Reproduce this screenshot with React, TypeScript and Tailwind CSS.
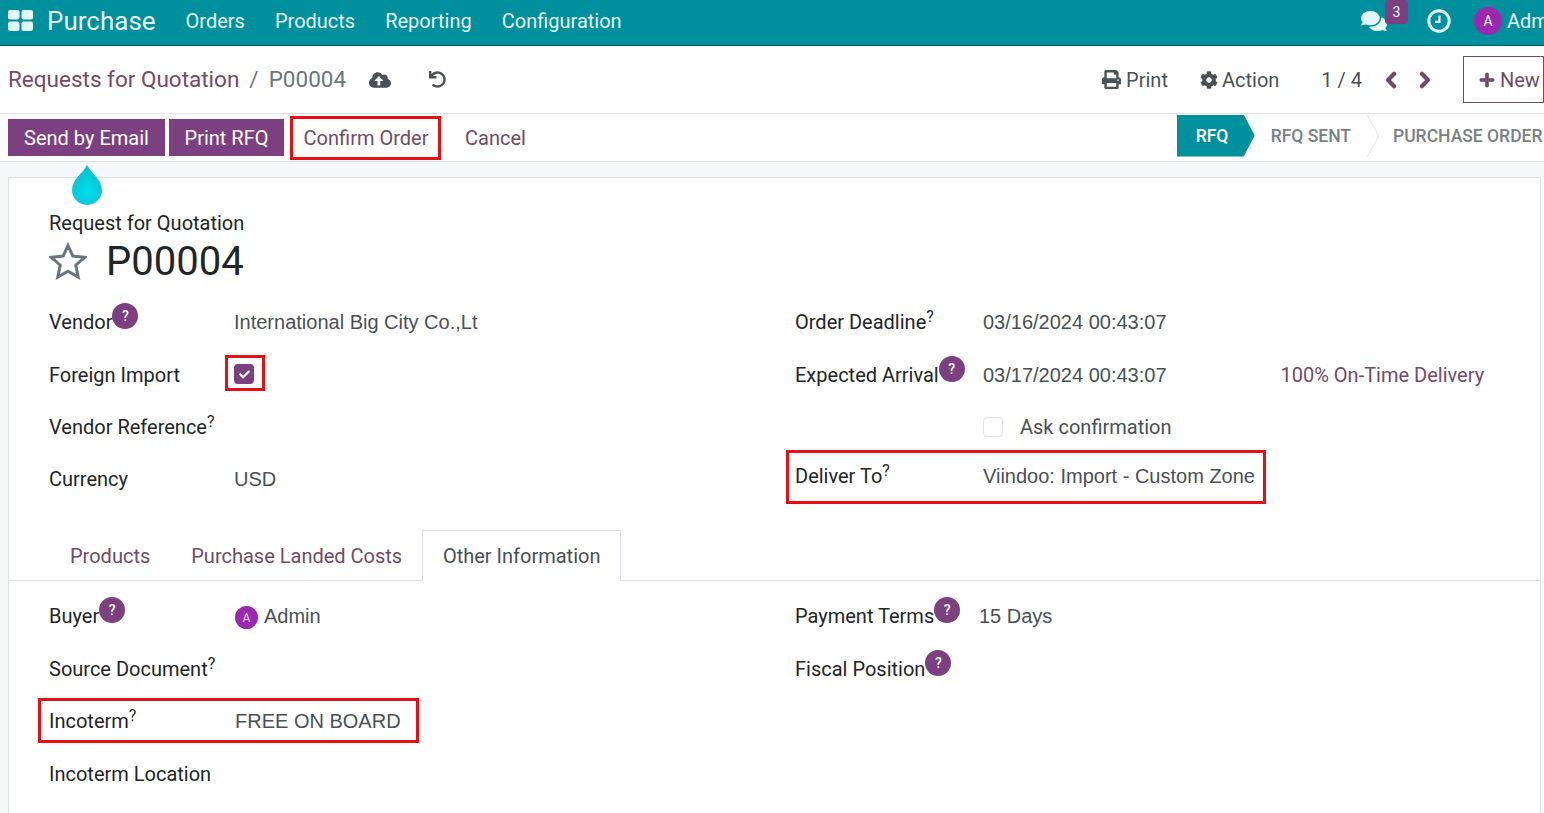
import { FaCloudUploadAlt, FaUndo, FaPrint, FaCog, FaChevronLeft, FaChevronRight, FaPlus, FaComments, FaCheck } from 'react-icons/fa';
import type { ReactNode } from 'react';

const PLUM = 'text-[#714b67]';
const INPUT = "font-['Liberation_Sans',sans-serif]";

function Help() {
  return (
    <span className="absolute left-full bottom-[5px] flex h-[26px] w-[26px] items-center justify-center rounded-full bg-[#7c3f80] text-[14px] font-medium text-white">
      ?
    </span>
  );
}

function Label({ text, help }: { text: string; help?: 'circle' | 'sup' }) {
  return (
    <span className="relative whitespace-nowrap text-[#212529]">
      {text}
      {help === 'sup' && <sup className="absolute left-full top-[-1px] text-[16px] leading-none">?</sup>}
      {help === 'circle' && <Help />}
    </span>
  );
}

function Row({ label, help, labelWidth, children }: { label?: string; help?: 'circle' | 'sup'; labelWidth: string; children?: ReactNode }) {
  return (
    <div className="flex h-[52.4px] items-center">
      <div className={labelWidth}>{label && <Label text={label} help={help} />}</div>
      <div className="flex min-w-0 flex-1 items-center text-[#495057] whitespace-nowrap">{children}</div>
    </div>
  );
}

function RedBox({ className }: { className: string }) {
  return <div className={`pointer-events-none absolute border-[3px] border-[#e50f14] ${className}`} />;
}

export default function App() {
  return (
    <div className="relative flex h-[813px] w-[1544px] flex-col overflow-hidden bg-[#f6f7f9] font-['Roboto',sans-serif] text-[20px] leading-[28px]">
      {/* top nav */}
      <header className="flex h-[46px] shrink-0 items-center border-b border-[#05606a] bg-[#008f9c] pb-[4px] text-[#e3f6f7]">
        <svg viewBox="0 0 26 22" className="ml-[8px] h-[22px] w-[26px]" fill="#e3f6f7">
          <rect x="0" y="0" width="11.5" height="9.5" rx="2" />
          <rect x="13.5" y="0" width="11.5" height="9.5" rx="2" />
          <rect x="0" y="11.5" width="11.5" height="9.5" rx="2" />
          <rect x="13.5" y="11.5" width="11.5" height="9.5" rx="2" />
        </svg>
        <span className="ml-[13px] text-[26px]">Purchase</span>
        <nav className="ml-[30px] flex gap-[30px]">
          <span>Orders</span>
          <span>Products</span>
          <span>Reporting</span>
          <span>Configuration</span>
        </nav>
        <div className="ml-auto flex items-center whitespace-nowrap">
          <div className="relative">
            <FaComments className="h-[24px] w-[26px]" />
            <span className="absolute left-[24px] top-[-9px] flex h-[24px] w-[23px] items-center justify-center rounded-[3px] bg-[#7c3f80] text-[14px]">3</span>
          </div>
          <svg viewBox="0 0 24 24" className="ml-[40px] h-[24px] w-[24px]" fill="none" stroke="#e3f6f7">
            <circle cx="12" cy="12" r="10.2" strokeWidth="3" />
            <path d="M12.5 6.5 V12.8 H8" strokeWidth="2.2" />
          </svg>
          <span className="ml-[23px] flex h-[28px] w-[28px] items-center justify-center rounded-full bg-[#9c27b0] text-[14px]">A</span>
          <span className="ml-[5px] w-[37px] overflow-hidden">Admin</span>
        </div>
      </header>

      {/* breadcrumb row */}
      <div className="flex h-[68px] shrink-0 items-center border-b border-[#dee2e6] bg-white pl-[8px] text-[#495057]">
        <span className={`-mt-[2px] text-[22.5px] ${PLUM}`}>Requests for Quotation</span>
        <span className="-mt-[2px] ml-[10px] text-[22.5px] text-[#6c757d]">/</span>
        <span className="-mt-[2px] ml-[10px] text-[22.5px] text-[#6c757d]">P00004</span>
        <FaCloudUploadAlt className="ml-[23px] h-[18px] w-[22px] text-[#495057]" />
        <FaUndo className="ml-[38px] h-[17px] w-[17px] text-[#495057]" />
        <div className="ml-auto flex items-center whitespace-nowrap">
          <FaPrint className="h-[19px] w-[19px]" />
          <span className="ml-[5px]">Print</span>
          <FaCog className="ml-[32px] h-[18px] w-[18px]" />
          <span className="ml-[4px]">Action</span>
          <span className="ml-[42px]">1 / 4</span>
          <FaChevronLeft className={`ml-[22px] h-[18px] w-[14px] stroke-[40] ${PLUM}`} />
          <FaChevronRight className={`ml-[20px] h-[18px] w-[14px] stroke-[40] ${PLUM}`} />
          <div className={`ml-[31px] flex h-[47px] w-[81px] items-center border border-[#714b67] pl-[15px] ${PLUM}`}>
            <FaPlus className="h-[16px] w-[16px] shrink-0 stroke-[20]" />
            <span className="ml-[5px]">New</span>
          </div>
        </div>
      </div>

      {/* action bar + statusbar */}
      <div className="flex h-[48px] shrink-0 items-center border-b border-[#dee2e6] bg-white pl-[8px]">
        <button className="h-[37px] w-[157px] bg-[#7c3f80] text-white">Send by Email</button>
        <button className="ml-[4px] h-[37px] w-[115px] bg-[#7c3f80] text-white">Print RFQ</button>
        <button className={`ml-[6px] h-[44px] w-[151px] border-[3px] border-[#e50f14] bg-white pl-px ${PLUM}`}>Confirm Order</button>
        <button className={`ml-[24px] ${PLUM}`}>Cancel</button>
        <div className="ml-auto flex h-full items-center self-start whitespace-nowrap pb-[4px] text-[17.5px] font-medium text-[#7a7f85]">
          <div className="flex h-[42px] w-[78px] items-center bg-[#008f9c] pl-[19px] text-white [clip-path:polygon(0_0,86%_0,100%_50%,86%_100%,0_100%)]">RFQ</div>
          <span className="ml-[16px]">RFQ SENT</span>
          <svg viewBox="0 0 14 42" className="ml-[15px] h-[42px] w-[14px]" fill="none" stroke="#dee2e6"><path d="M1 0 L13 21 L1 42" /></svg>
          <span className="ml-[13px] w-[151px] overflow-hidden">PURCHASE ORDER</span>
        </div>
      </div>

      {/* form sheet */}
      <main className="mt-[15px] ml-[8px] mr-[3px] flex-1 border border-b-0 border-[#dee2e6] bg-white">
        <div className="px-[40px] pt-[31px]">
          <div className="text-[#212529]">Request for Quotation</div>
          <div className="mt-[1px] flex items-center">
            <svg viewBox="0 0 38 38" className="mb-[2px] h-[38px] w-[38px]" fill="none" stroke="#6c757d" strokeWidth="3" strokeLinejoin="miter">
              <path d="M19 3.5 L23.8 14 L35.6 15.3 L26.8 23.2 L29.2 35 L19 29.2 L8.8 35 L11.2 23.2 L2.4 15.3 L14.2 14 Z" />
            </svg>
            <h1 className="ml-[19px] text-[40px] leading-[48px] text-[#212529]">P00004</h1>
          </div>

          <div className="mt-[10px] grid grid-cols-[746px_1fr]">
            <div>
              <Row label="Vendor" help="circle" labelWidth="w-[185px]"><span className={INPUT}>International Big City Co.,Lt</span></Row>
              <Row label="Foreign Import" labelWidth="w-[185px]">
                <div className="relative -mt-px">
                  <span className="flex h-[20px] w-[20px] items-center justify-center rounded-[4px] bg-[#7c3f80]">
                    <FaCheck className="h-[11px] w-[11px] text-white" />
                  </span>
                  <RedBox className="-left-[9px] -right-[11px] -top-[9px] -bottom-[7px]" />
                </div>
              </Row>
              <Row label="Vendor Reference" help="sup" labelWidth="w-[185px]" />
              <Row label="Currency" labelWidth="w-[185px]"><span className={INPUT}>USD</span></Row>
            </div>
            <div className="flex flex-col">
              <Row label="Order Deadline" help="sup" labelWidth="w-[188px]"><span className={INPUT}>03/16/2024 00:43:07</span></Row>
              <Row label="Expected Arrival" help="circle" labelWidth="w-[188px]">
                <span className={INPUT}>03/17/2024 00:43:07</span>
                <span className={`ml-[114px] ${PLUM}`}>100% On-Time Delivery</span>
              </Row>
              <Row labelWidth="w-[188px]">
                <span className="h-[20px] w-[20px] rounded-[4px] border border-[#dee2e6]" />
                <span className="ml-[17px]">Ask confirmation</span>
              </Row>
              <div className="relative -mt-[3px]">
                <Row label="Deliver To" help="sup" labelWidth="w-[188px]"><span className={INPUT}>Viindoo: Import - Custom Zone</span></Row>
                <RedBox className="left-[-9px] top-[0px] h-[54px] w-[480px]" />
              </div>
            </div>
          </div>
        </div>

        {/* tabs */}
        <div className="mt-[24px] flex h-[51px] items-stretch border-b border-[#dee2e6] pl-[40px]">
          <span className={`flex items-center px-[21px] pt-[2px] ${PLUM}`}>Products</span>
          <span className={`flex items-center px-[20px] pt-[2px] ${PLUM}`}>Purchase Landed Costs</span>
          <span className="-mb-px flex w-[199px] items-center justify-center border border-b-0 border-[#dee2e6] bg-white text-[#495057]">Other Information</span>
        </div>

        <div className="grid grid-cols-[746px_1fr] px-[40px] pt-[9.5px]">
          <div>
            <Row label="Buyer" help="circle" labelWidth="w-[186px]">
              <span className="mt-[3px] flex h-[23px] w-[23px] items-center justify-center rounded-full bg-[#9c27b0] text-[12px] text-[#e9d7ee]">A</span>
              <span className={`ml-[6px] ${INPUT}`}>Admin</span>
            </Row>
            <Row label="Source Document" help="sup" labelWidth="w-[186px]" />
            <div className="relative">
              <Row label="Incoterm" help="sup" labelWidth="w-[186px]"><span className={INPUT}>FREE ON BOARD</span></Row>
              <RedBox className="left-[-11px] top-[3px] h-[45px] w-[381px]" />
            </div>
            <div className="pt-px">
              <Row label="Incoterm Location" labelWidth="w-[186px]" />
            </div>
          </div>
          <div>
            <Row label="Payment Terms" help="circle" labelWidth="w-[184px]"><span className={INPUT}>15 Days</span></Row>
            <Row label="Fiscal Position" help="circle" labelWidth="w-[184px]" />
          </div>
        </div>
      </main>

      {/* droplet pointer over the toolbar edge */}
      <svg viewBox="0 0 30 40" className="absolute left-[72px] top-[165px] h-[40px] w-[30px]">
        <defs>
          <radialGradient id="drop" cx="50%" cy="65%" r="60%">
            <stop offset="0%" stopColor="#00dcec" />
            <stop offset="100%" stopColor="#0cbfd2" />
          </radialGradient>
        </defs>
        <path d="M15 0 C19 8 30 15 30 25 A15 15 0 0 1 0 25 C0 15 11 8 15 0 Z" fill="url(#drop)" />
      </svg>
    </div>
  );
}
